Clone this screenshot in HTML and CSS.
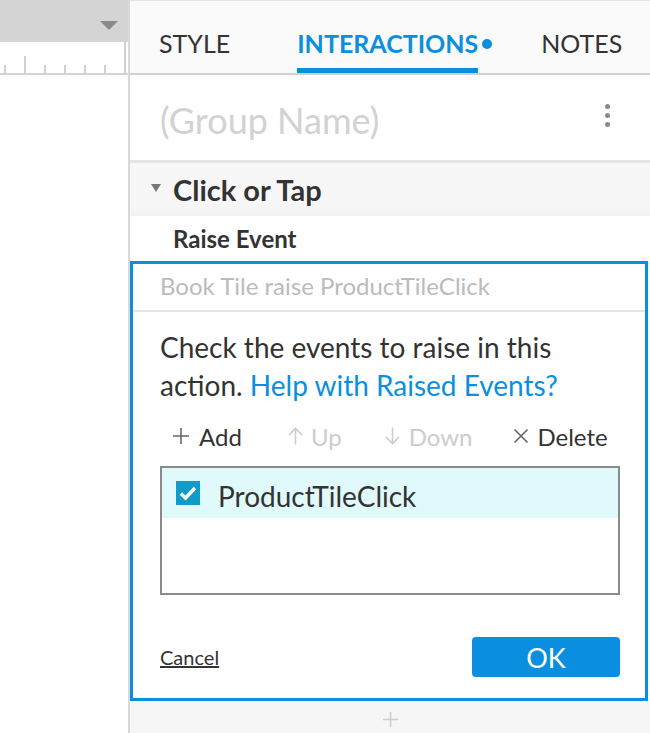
FILE: index.html
```html
<!DOCTYPE html>
<html lang="en">
<head>
    <meta charset="UTF-8">
    <meta name="viewport" content="width=device-width, initial-scale=1.0">
    <title>Interactions</title>
    <link rel="stylesheet" href="styles.css">
</head>
<body>
    <div class="app">
        <div class="canvas-side">
            <div class="zoom-bar"><span class="zoom-caret"></span></div>
            <div class="ruler"></div>
        </div>

        <div class="inspector">
            <div class="tabs">
                <div class="tab tab-style">STYLE</div>
                <div class="tab tab-active">INTERACTIONS<span class="tab-dot"></span></div>
                <div class="tab tab-notes">NOTES</div>
            </div>

            <div class="name-row">
                <div class="group-name">(Group Name)</div>
                <div class="kebab"><span></span><span></span><span></span></div>
            </div>

            <div class="event-head">
                <span class="caret-down"></span>
                <span class="event-title">Click or Tap</span>
            </div>

            <div class="action-title">Raise Event</div>

            <div class="action-box">
                <div class="action-desc">Book Tile raise ProductTileClick</div>
                <div class="action-body">
                    <div class="hint">
                        <div>Check the events to raise in this</div>
                        <div><span>action.</span> <a href="#" class="help">Help with Raised Events?</a></div>
                    </div>

                    <div class="toolbar">
                        <span class="tool tool-add">
                            <svg width="20" height="20" viewBox="0 0 20 20"><path d="M10 2v16M2 10h16" stroke="#666" stroke-width="1.6" fill="none"/></svg>
                            Add
                        </span>
                        <span class="tool tool-off tool-up">
                            <svg width="15" height="18" viewBox="0 0 15 18"><path d="M7.5 17.5V1.5M1 8l6.5-6.5L14 8" stroke="#ccc" stroke-width="1.6" fill="none"/></svg>
                            Up
                        </span>
                        <span class="tool tool-off tool-down">
                            <svg width="15" height="18" viewBox="0 0 15 18"><path d="M7.5 0.5v16M1 10l6.5 6.5L14 10" stroke="#ccc" stroke-width="1.6" fill="none"/></svg>
                            Down
                        </span>
                        <span class="tool tool-delete">
                            <svg width="16" height="16" viewBox="0 0 16 16"><path d="M1.5 1.5l13 13M14.5 1.5l-13 13" stroke="#666" stroke-width="1.6" fill="none"/></svg>
                            Delete
                        </span>
                    </div>

                    <div class="event-list">
                        <div class="event-item">
                            <span class="check">
                                <svg width="24" height="24" viewBox="0 0 24 24"><path d="M5 12.5l4.5 4.5 9.5-10" stroke="#fff" stroke-width="3.4" fill="none"/></svg>
                            </span>
                            <span class="event-name">ProductTileClick</span>
                        </div>
                    </div>

                    <div class="footer">
                        <a href="#" class="cancel">Cancel</a>
                        <button class="ok">OK</button>
                    </div>
                </div>
            </div>

            <div class="add-strip">
                <svg width="15" height="15" viewBox="0 0 15 15"><path d="M7.5 0v15M0 7.5h15" stroke="#ccc" stroke-width="1.5" fill="none"/></svg>
            </div>
        </div>
    </div>
</body>
</html>
```

FILE: styles.css
```css
body {
    margin: 0;
    font-family: "Lato", "Noto Sans", sans-serif;
    color: #333;
    background-color: #fff;
    overflow: hidden;
}
.app {
    display: flex;
    height: 733px;
}
.canvas-side {
    width: 128px;
    border-right: 2px solid #d8d8d8;
    flex-shrink: 0;
}
.zoom-bar {
    height: 42px;
    background-color: #d4d4d4;
    position: relative;
}
.zoom-caret {
    position: absolute;
    left: 100px;
    top: 21px;
    border-left: 9px solid transparent;
    border-right: 9px solid transparent;
    border-top: 9px solid #8a8a8a;
}
.ruler {
    height: 31px;
    border-bottom: 2px solid #d4d4d4;
    background:
        linear-gradient(#d0d0d0, #d0d0d0) 124px 0 / 2px 31px no-repeat,
        linear-gradient(#d0d0d0, #d0d0d0) 24px 14px / 2px 17px no-repeat,
        repeating-linear-gradient(90deg, transparent 0 4px, #d0d0d0 4px 6px, transparent 6px 20px) 0 23px / 124px 8px no-repeat;
}
.inspector {
    flex: 1;
    display: flex;
    flex-direction: column;
}
.tabs {
    background-color: #fafafa;
    border-top: 1px solid #e4e4e4;
    border-bottom: 2px solid #d0d0d0;
    box-sizing: border-box;
    height: 75px;
    display: flex;
    align-items: flex-end;
    padding-left: 29px;
    font-size: 25px;
}
.tab {
    padding-bottom: 15px;
    color: #333;
}
.tab-style {
    margin-right: 67px;
}
.tab-active {
    color: #0a8fe0;
    font-weight: bold;
    position: relative;
    border-bottom: 5px solid #0a8fe0;
    padding-bottom: 10px;
    margin-right: 63px;
}
.tab-dot {
    position: absolute;
    right: -14px;
    top: 11px;
    width: 10px;
    height: 10px;
    border-radius: 50%;
    background-color: #0a8fe0;
}
.name-row {
    display: flex;
    align-items: center;
    justify-content: space-between;
    padding: 0 40px 0 30px;
    border-bottom: 3px solid #e4e4e4;
    box-sizing: border-box;
    height: 88px;
}
.group-name {
    font-size: 36px;
    color: #d2d2d2;
    padding-top: 5px;
}
.kebab {
    display: flex;
    flex-direction: column;
    gap: 4px;
    padding-bottom: 4px;
}
.kebab span {
    width: 5px;
    height: 5px;
    border-radius: 50%;
    background-color: #888;
}
.event-head {
    height: 53px;
    background: linear-gradient(#f7f7f7 80%, #f1f1f1);
    display: flex;
    align-items: center;
    padding-left: 21px;
}
.caret-down {
    border-left: 5px solid transparent;
    border-right: 5px solid transparent;
    border-top: 8px solid #777;
    margin-right: 12px;
    margin-bottom: 4px;
}
.event-title {
    font-size: 29px;
    font-weight: bold;
    color: #333;
}
.action-title {
    height: 45px;
    display: flex;
    align-items: center;
    padding-left: 43px;
    font-size: 24px;
    font-weight: bold;
}
.action-box {
    border: 3px solid #0a8fe0;
    margin-right: 2px;
    height: 440px;
    box-sizing: border-box;
}
.action-desc {
    height: 48px;
    border-bottom: 2px solid #e4e4e4;
    box-sizing: border-box;
    padding: 7px 0 0 27px;
    font-size: 24px;
    color: #bbb;
}
.action-body {
    padding: 0 25px 0 27px;
}
.hint {
    margin-top: 16px;
    font-size: 28px;
    line-height: 38px;
}
.help {
    color: #0a8fe0;
    text-decoration: none;
}
.toolbar {
    display: flex;
    align-items: center;
    margin-top: 17px;
    padding-left: 11px;
    height: 30px;
    font-size: 24px;
}
.tool {
    display: flex;
    align-items: center;
    gap: 8px;
}
.tool-add {
    margin-right: 46px;
}
.tool-up {
    margin-right: 43px;
}
.tool-down {
    gap: 9px;
    margin-right: 41px;
}
.tool-delete {
    gap: 8px;
}
.tool-off {
    color: #ccc;
}
.event-list {
    margin-top: 15px;
    height: 129px;
    border: 2px solid #8a8a8a;
    box-sizing: border-box;
}
.event-item {
    height: 50px;
    background-color: #e0f9fa;
    display: flex;
    align-items: center;
    padding-left: 14px;
    font-size: 28px;
}
.event-name {
    padding-top: 5px;
}
.check {
    width: 24px;
    height: 24px;
    background-color: #129bc8;
    margin-right: 18px;
    display: flex;
}
.footer {
    display: flex;
    justify-content: space-between;
    align-items: center;
    margin-top: 42px;
}
.cancel {
    color: #333;
    font-size: 20px;
}
.ok {
    width: 148px;
    height: 40px;
    border: none;
    border-radius: 4px;
    background-color: #0a8fe0;
    color: white;
    font-family: inherit;
    font-size: 27px;
}
.add-strip {
    flex: 1;
    background-color: #f6f6f6;
    display: flex;
    justify-content: center;
    padding-top: 11px;
}
```
